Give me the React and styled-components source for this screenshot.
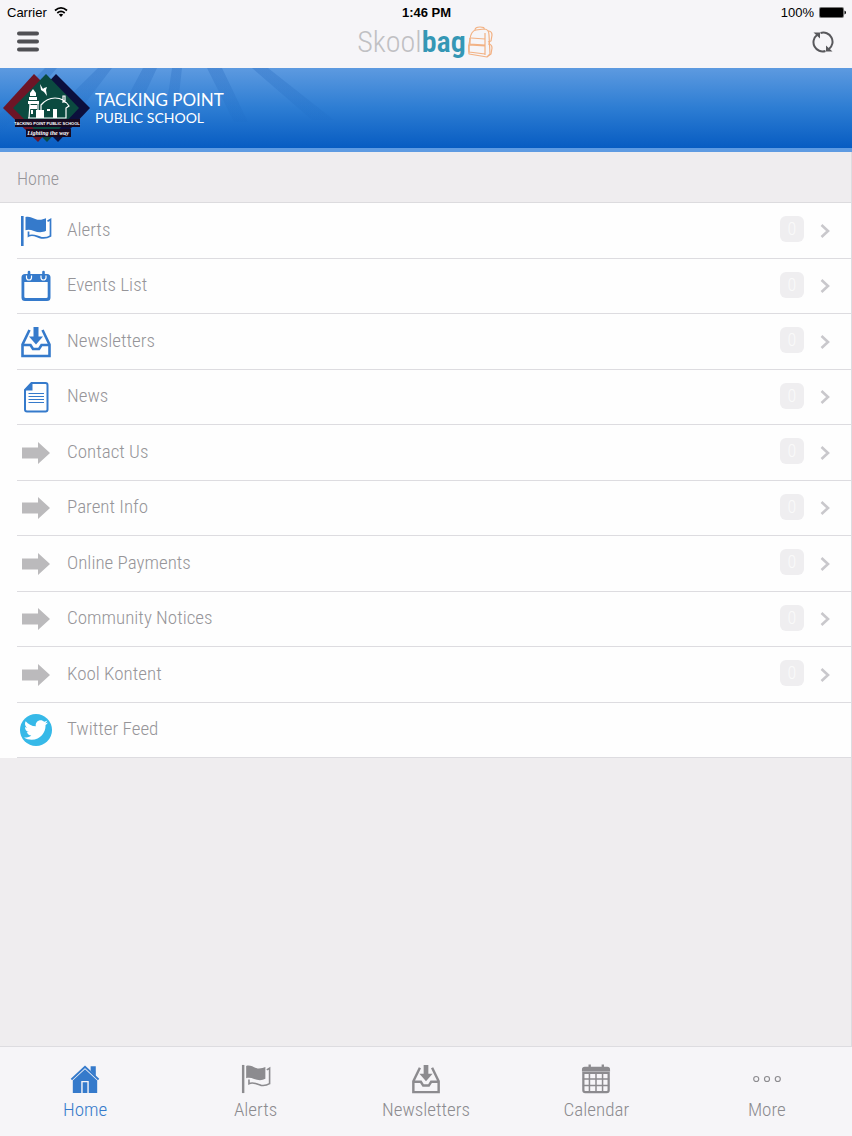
import React, { useState } from 'react';
import styled, { createGlobalStyle } from 'styled-components';
import { FaTwitter } from 'react-icons/fa';

const menuItems = [
	{ label: 'Alerts', icon: 'flag', count: 0 },
	{ label: 'Events List', icon: 'events', count: 0 },
	{ label: 'Newsletters', icon: 'inbox', count: 0 },
	{ label: 'News', icon: 'page', count: 0 },
	{ label: 'Contact Us', icon: 'arrow', count: 0 },
	{ label: 'Parent Info', icon: 'arrow', count: 0 },
	{ label: 'Online Payments', icon: 'arrow', count: 0 },
	{ label: 'Community Notices', icon: 'arrow', count: 0 },
	{ label: 'Kool Kontent', icon: 'arrow', count: 0 },
	{ label: 'Twitter Feed', icon: 'twitter' },
];

const tabs = [
	{ label: 'Home', icon: 'home' },
	{ label: 'Alerts', icon: 'flag' },
	{ label: 'Newsletters', icon: 'inbox' },
	{ label: 'Calendar', icon: 'calendar' },
	{ label: 'More', icon: 'more' },
];

const shapes = {
	flag: (
		<>
			<path d="M1 1h2.600v30H1z" fill="currentColor" />
			<path
				d="M5.500 2C11 .6 14 4.600 19 4.800c3 0 5-.8 7-1.600v12.600c-3.500 2-8 1.800-12 .2-3-1.300-6-1.800-8.500-.8z"
				fill="currentColor"
			/>
			<path
				d="M8.500 16.500v4.500c5-2.500 8 .8 13 1.800 4 .6 7-.6 9-1.800V4.500L27.500 6.300"
				fill="none"
				stroke="currentColor"
				strokeWidth="1.700"
			/>
		</>
	),
	events: (
		<>
			<path
				fillRule="evenodd"
				fill="currentColor"
				d="M5 4h22a3.500 3.500 0 0 1 3.500 3.500v20A3.500 3.500 0 0 1 27 31H5a3.500 3.500 0 0 1-3.500-3.500v-20A3.500 3.500 0 0 1 5 4zM4.300 12v14.500q0 1.500 1.500 1.500h20.400q1.500 0 1.500-1.500V12z"
			/>
			<path
				d="M6.500 5.500v2a2.500 2.500 0 0 0 5 0v-2M21 5.500v2a2.500 2.500 0 0 0 5 0v-2"
				fill="none"
				stroke="#fff"
				strokeWidth="1.200"
			/>
			<path
				d="M9 2v5M23.500 2v5"
				stroke="currentColor"
				strokeWidth="2.600"
				strokeLinecap="round"
			/>
		</>
	),
	inbox: (
		<>
			<path d="M13.500 1h5v9.500h4.500L16 18.500 9 10.500h4.500z" fill="currentColor" />
			<path
				d="M9.500 4 2.500 18.500v11.500h27V18.500L22.500 4M2.500 19h8l2.500 4h6l2.500-4h8"
				fill="none"
				stroke="currentColor"
				strokeWidth="2.600"
			/>
		</>
	),
	page: (
		<>
			<path
				d="M11.500 2H25.500q2 0 2 2v24.500q0 2-2 2H7q-2 0-2-2V9z"
				fill="none"
				stroke="currentColor"
				strokeWidth="2"
			/>
			<path d="M12.500 1.500V9.500H4.500z" fill="currentColor" />
			<path
				d="M8.500 12.500h15.500M8.500 15.500h15.500M8.500 18.500h15.500M8.500 21.500h15.500"
				stroke="currentColor"
				strokeWidth="1"
			/>
		</>
	),
	arrow: <path d="M2 10.500h16V5l12 11-12 11v-5.500H2z" fill="currentColor" />,
	home: (
		<>
			<path
				d="M1.500 16.500 16 3l14.500 13.500"
				fill="none"
				stroke="currentColor"
				strokeWidth="2"
			/>
			<path d="M22 2.500h5.500v10.500L22 7.500z" fill="currentColor" />
			<path
				fillRule="evenodd"
				d="M16 5.500 29 17.500V31H20V18h-8v13H3V17.500zM13.500 19.500h5V31h-5z"
				fill="currentColor"
			/>
		</>
	),
	calendar: (
		<>
			<path
				d="M1 8V6q0-3 3-3h24q3 0 3 3v2z M8 .500h2.500V4H8zM22 .500h2.500V4H22z"
				fill="currentColor"
			/>
			<path
				d="M2.500 9.500h27v18.500q0 2-2 2h-23q-2 0-2-2z"
				fill="none"
				stroke="currentColor"
				strokeWidth="2.400"
			/>
			<path
				d="M9 9v21M16 9v21M23 9v21M2 16h28M2 22.800h28"
				stroke="currentColor"
				strokeWidth="1.600"
			/>
		</>
	),
	more: (
		<g fill="none" stroke="currentColor" strokeWidth="1.200">
			<circle cx="4.500" cy="16" r="2.700" />
			<circle cx="16" cy="16" r="2.700" />
			<circle cx="27.500" cy="16" r="2.700" />
		</g>
	),
};

function Icon({ name, size = 32 }) {
	return (
		<svg width={size} height={size} viewBox="0 0 32 32" aria-hidden="true">
			{shapes[name]}
		</svg>
	);
}

function SchoolCrest() {
	return (
		<svg width="94" height="80" viewBox="0 0 94 80" role="img" aria-label="School crest">
			<path d="M34 6 68 40 38 74 3 40z" fill="#6d1526" />
			<path d="M56 6 90 40 58 74 24 40z" fill="#0c0f3c" />
			<path d="M46 6 79 40 47 74 13 40z" fill="#0b4a40" />
			<path d="M40 16l3 5 1-1 3-1-1 3 1 6-3-4-3-2z" fill="#fff" />
			<path
				d="M33 21l3 4v3h-6v-3zM29 29h8v3h-8zM28 33h11v3H28zM30 37h7v4h-7z"
				fill="#fff"
			/>
			<path
				d="M30 36l-1 14M38 36v8M41 50V37q6-7 14-7 9 0 14 8l-3 2v10H28M63 35v-7h2v7"
				fill="none"
				stroke="#fff"
				strokeWidth="1.200"
			/>
			<path d="M36 42h8v8h-8zM53 41h4v9h-4zM47 41h3v2h-3zM31 42h2v4h-2z" fill="#fff" />
			<path d="M15 51h65v8H15z" fill="#17091f" />
			<path d="M26 61h45v8H26z" fill="#17091f" />
			<CrestName x="47" y="57">TACKING POINT PUBLIC SCHOOL</CrestName>
			<CrestMotto x="48" y="67">Lighting the way</CrestMotto>
		</svg>
	);
}

export default function App() {
	const [activeTab, setActiveTab] = useState('Home');

	return (
		<>
			<GlobalStyle />
			<Page>
				<StatusBar>
					<Carrier>
						Carrier
						<svg width="14" height="12" viewBox="0 0 14 12" aria-hidden="true">
							<path
								d="M1 4.500Q7-.8 13 4.500M3.300 7Q7 3.700 10.700 7"
								fill="none"
								stroke="#000"
								strokeWidth="1.700"
							/>
							<path d="M4.800 8.600Q7 6.800 9.200 8.600L7 11z" />
						</svg>
					</Carrier>
					<Clock>1:46 PM</Clock>
					<Battery>
						100%
						<svg width="27" height="11" viewBox="0 0 27 11" aria-hidden="true">
							<rect width="25" height="11" rx="2" fill="#777" />
							<rect x="1" y="1" width="23" height="9" rx="1" />
							<path d="M25.500 3.500q1.500.5 1.500 2t-1.500 2z" />
						</svg>
					</Battery>
				</StatusBar>
				<NavBar>
					<IconButton aria-label="Menu">
						<svg width="22" height="22" viewBox="0 0 22 22">
							<path
								d="M2 2.500h18M2 10.500h18M2 18.500h18"
								stroke="#505054"
								strokeWidth="4"
								strokeLinecap="round"
							/>
						</svg>
					</IconButton>
					<Brand>
						<span>Skool</span>
						<b>bag</b>
						<svg width="28" height="32" viewBox="0 0 28 32" aria-hidden="true">
							<g fill="none" stroke="#f2b183" strokeWidth="1.200" strokeLinejoin="round">
								<path d="M4 13Q5 5 10 4l8-1q5 0 5 6l1 19-3 3-18-3q-1-8 1-15z" />
								<path d="M9 4q0-3 5-3t4 2M5 12l14 1M4 12v6l15 1v-6M3 19v7l16 2v-8zM22 5q4 0 4 4l-1 6-3 1M22 18q4 0 4 4l-1 6-3 2M19 7v22" />
							</g>
						</svg>
					</Brand>
					<IconButton aria-label="Refresh">
						<svg width="22" height="22" viewBox="0 0 22 22">
							<g fill="none" stroke="#58585c" strokeWidth="2">
								<path d="M5 4A9.200 9.200 0 0 0 13.500 20M8.500 2A9.200 9.200 0 0 1 17 18" />
							</g>
							<path d="M1.500 1.500H8v6zM20.500 20.500H14v-6z" fill="#58585c" />
						</svg>
					</IconButton>
				</NavBar>
				<Banner>
					<Rays viewBox="0 0 400 80" preserveAspectRatio="xMinYMin slice" aria-hidden="true">
						<defs>
							<linearGradient id="ray" x1="0" y1="0" x2="0" y2="1">
								<stop offset="0" stopColor="#0b51ad" stopOpacity=".22" />
								<stop offset="1" stopColor="#0b51ad" stopOpacity="0" />
							</linearGradient>
						</defs>
						<path
							d="M45 0h12L0 66V46zM98 0h14L65 62H35zM143 0h14l-28 60h-18zM172 0h10l-6 54h-12zM207 0h15l26 54h-14zM252 0h16l66 52h-22z"
							fill="url(#ray)"
						/>
					</Rays>
					<SchoolCrest />
					<SchoolName>
						TACKING POINT
						<small>PUBLIC SCHOOL</small>
					</SchoolName>
				</Banner>
				<Content>
					<PageTitle>Home</PageTitle>
					<Menu>
						{menuItems.map(({ label, icon, count }) => (
							<MenuItem key={label}>
								<MenuLink href="#">
									<MenuIcon $muted={icon === 'arrow'}>
										{icon === 'twitter' ? (
											<TwitterBadge>
												<FaTwitter size={24} />
											</TwitterBadge>
										) : (
											<Icon name={icon} />
										)}
									</MenuIcon>
									<MenuLabel>{label}</MenuLabel>
									{count !== undefined && (
										<>
											<Count>{count}</Count>
											<svg width="10" height="14" viewBox="0 0 10 14" aria-hidden="true">
												<path
													d="M1.500 1 8 7l-6.500 6"
													fill="none"
													stroke="#c9c8cc"
													strokeWidth="2.600"
												/>
											</svg>
										</>
									)}
								</MenuLink>
							</MenuItem>
						))}
					</Menu>
				</Content>
				<TabBar>
					{tabs.map(({ label, icon }) => (
						<Tab
							key={label}
							$active={activeTab === label}
							onClick={() => setActiveTab(label)}
						>
							<Icon name={icon} size={30} />
							{label}
						</Tab>
					))}
				</TabBar>
			</Page>
		</>
	);
}

const GlobalStyle = createGlobalStyle`
	* {
		box-sizing: border-box;
	}

	body {
		margin: 0;
		font-family: 'Roboto Condensed', Roboto, sans-serif;
		font-weight: 300;
		color: #969599;
	}

	svg {
		display: block;
		flex-shrink: 0;
	}

	button {
		border: none;
		background: none;
		padding: 0;
		font: inherit;
		color: inherit;
		cursor: pointer;
	}
`;

const Page = styled.div`
	display: flex;
	flex-direction: column;
	min-height: 100vh;
	background: #f6f5f8;
`;

const StatusBar = styled.div`
	display: grid;
	grid-template-columns: 1fr auto 1fr;
	align-items: center;
	height: 24px;
	padding: 0 6px 0 7px;
	font: 13px 'Liberation Sans', Arial, sans-serif;
	color: #000;
`;

const Carrier = styled.div`
	display: flex;
	align-items: center;
	gap: 7px;
`;

const Clock = styled.div`
	font-weight: bold;
`;

const Battery = styled.div`
	display: flex;
	align-items: center;
	justify-content: flex-end;
	gap: 5px;
`;

const NavBar = styled.header`
	display: flex;
	align-items: center;
	justify-content: space-between;
	height: 44px;
	padding: 0 18px 8px 17px;
`;

const IconButton = styled.button`
	width: 22px;
	height: 22px;
`;

const Brand = styled.div`
	display: flex;
	align-items: center;
	font-size: 30px;
	line-height: 36px;
	color: #c0c0c3;

	b {
		font-weight: 600;
		color: #3597b5;
	}
`;

const Banner = styled.div`
	position: relative;
	display: flex;
	align-items: center;
	height: 84px;
	border-bottom: 4px solid #5e9be2;
	background: linear-gradient(#5d9ae0, #2d7dd3 50%, #075cc2);
	overflow: hidden;
`;

const Rays = styled.svg`
	position: absolute;
	left: 0;
	top: 0;
	width: 400px;
	height: 80px;

	& ~ * {
		position: relative;
	}
`;

const CrestName = styled.text`
	font: bold 4px 'Liberation Sans', Arial, sans-serif;
	fill: #fff;
	text-anchor: middle;
`;

const CrestMotto = styled.text`
	font: italic bold 6px 'Liberation Serif', serif;
	fill: #fff;
	text-anchor: middle;
`;

const SchoolName = styled.h1`
	margin: 0 0 0 1px;
	font: 17px/18px Lato, sans-serif;
	color: #fff;

	small {
		display: block;
		font-size: 14px;
		line-height: 17px;
	}
`;

const Content = styled.main`
	flex: 1;
	border-right: 1px solid #dddce0;
	background: #efedef;
`;

const PageTitle = styled.h2`
	margin: 0;
	padding: 2px 17px 0;
	height: 51px;
	border-bottom: 1px solid #dcdbde;
	font-size: 18px;
	font-weight: 300;
	line-height: 50px;
`;

const Menu = styled.ul`
	margin: 0;
	padding: 0 0 0 17px;
	list-style: none;
	background: #fefefe;
`;

const MenuItem = styled.li`
	height: 55px;
	border-bottom: 1px solid #dddce0;

	&:nth-child(odd) {
		height: 56px;
	}
`;

const MenuLink = styled.a`
	display: flex;
	align-items: center;
	height: 100%;
	padding: 0 21px 0 3px;
	color: inherit;
	text-decoration: none;
`;

const MenuIcon = styled.span`
	margin-right: 15px;
	color: ${({ $muted }) => ($muted ? '#bbbabc' : '#357acb')};
`;

const TwitterBadge = styled.span`
	display: flex;
	align-items: center;
	justify-content: center;
	width: 32px;
	height: 32px;
	border-radius: 50%;
	background: #36b9e8;
	color: #fff;
`;

const MenuLabel = styled.span`
	flex: 1;
	padding-bottom: 2px;
	font-size: 19px;
	line-height: 24px;
`;

const Count = styled.span`
	width: 24px;
	margin: 0 16px 3px 0;
	border-radius: 6px;
	background: #efeef0;
	color: #fafafa;
	font-size: 18px;
	line-height: 26px;
	text-align: center;
`;

const TabBar = styled.nav`
	display: grid;
	grid-template-columns: repeat(5, 1fr);
	height: 90px;
	border-top: 1px solid #dddce0;
`;

const Tab = styled.button`
	display: flex;
	flex-direction: column;
	align-items: center;
	gap: 4px;
	padding-top: 17px;
	font-size: 19px;
	line-height: 24px;
	color: ${({ $active }) => ($active ? '#357acb' : '#8c8b8f')};
`;
